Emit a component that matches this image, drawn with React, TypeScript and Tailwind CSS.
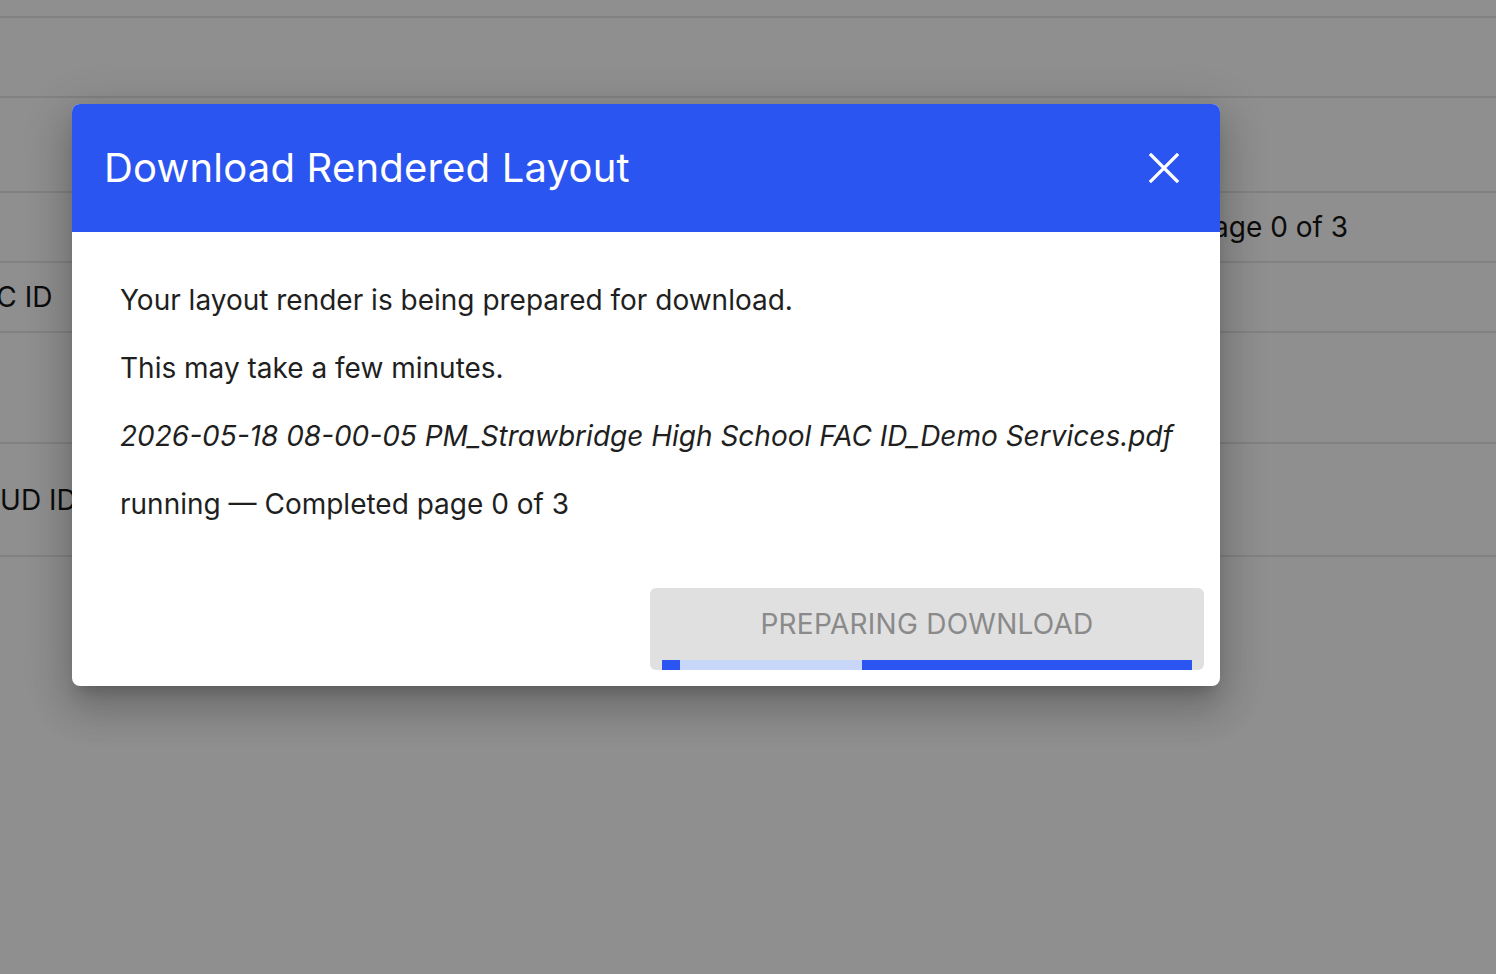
import React from 'react';

interface BgRow {
  height: string;
  left?: string;
  right?: string;
}

const rows: BgRow[] = [
  { height: 'h-[18px]' },
  { height: 'h-[80px]' },
  { height: 'h-[95px]' },
  { height: 'h-[70px]', right: 'running — Completed page 0 of 3' },
  { height: 'h-[70px]', left: 'FAC ID' },
  { height: 'h-[111px]' },
  { height: 'h-[113px]', left: 'STUD ID' },
];

function CloseIcon() {
  return (
    <svg width="32" height="32" viewBox="0 0 32 32" fill="none">
      <path d="M3 3L29 29M29 3L3 29" stroke="white" strokeWidth="3.2" strokeLinecap="square" />
    </svg>
  );
}

export default function App() {
  return (
    <div className="relative w-[1496px] h-[974px] overflow-hidden bg-white font-['Inter',sans-serif]">
      {/* Page behind the dialog */}
      <div className="flex flex-col">
        {rows.map((row, i) => (
          <div
            key={i}
            className={`${row.height} flex items-center border-b-2 border-[#e8e8e8] text-[28px] text-[#161616]`}
          >
            {row.left && <span className="-ml-[36px] whitespace-nowrap">{row.left}</span>}
            {row.right && (
              <span className="ml-auto pr-[148px] whitespace-nowrap">{row.right}</span>
            )}
          </div>
        ))}
      </div>

      {/* Backdrop */}
      <div className="absolute inset-0 bg-black/[0.44] pt-[104px] pl-[72px]">
        <div className="w-[1148px] h-[582px] bg-white rounded-lg overflow-hidden shadow-[0_11px_15px_-7px_rgba(0,0,0,0.2),0_24px_38px_3px_rgba(0,0,0,0.14),0_9px_46px_8px_rgba(0,0,0,0.12)] flex flex-col">
          {/* Header */}
          <div className="h-[128px] bg-[#2b55f1] flex items-center pl-[32px] pr-[40px]">
            <h2 className="text-[40px] text-white font-normal tracking-[0.2px]">Download Rendered Layout</h2>
            <button className="ml-auto w-[32px] h-[32px] flex items-center justify-center">
              <CloseIcon />
            </button>
          </div>

          {/* Body */}
          <div className="flex flex-col gap-[26px] pt-[47px] pl-[48px] text-[28px] leading-[42px] text-[#1f1f1f]">
            <p>Your layout render is being prepared for download.</p>
            <p>This may take a few minutes.</p>
            <p className="italic">2026-05-18 08-00-05 PM_Strawbridge High School FAC ID_Demo Services.pdf</p>
            <p>running — Completed page 0 of 3</p>
          </div>

          {/* Actions */}
          <div className="mt-auto flex justify-end p-[16px]">
            <div className="w-[554px] h-[82px] bg-[#e0e0e0] rounded-md flex flex-col px-[12px]">
              <div className="flex-1 flex items-center justify-center text-[28px] uppercase tracking-[0.25px] text-[#8a8a8a]">
                Preparing Download
              </div>
              <div className="h-[10px] flex bg-[#c8d6f9]">
                <div className="w-[18px] bg-[#2b55f1]" />
                <div className="w-[182px]" />
                <div className="flex-1 bg-[#2b55f1]" />
              </div>
            </div>
          </div>
        </div>
      </div>
    </div>
  );
}
